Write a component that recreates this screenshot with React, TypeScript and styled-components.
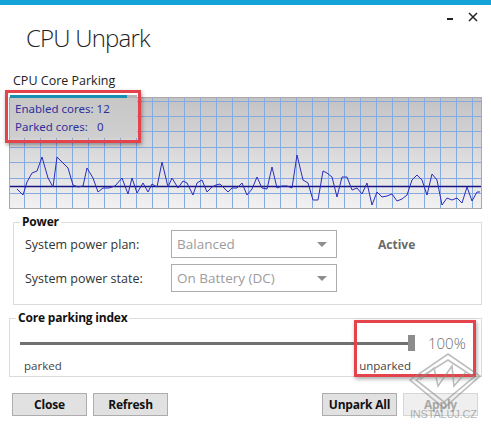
import styled, { createGlobalStyle } from "styled-components";

const GlobalStyle = createGlobalStyle`
  html, body {
    margin: 0;
    padding: 0;
    background: #ffffff;
  }
  body {
    font-family: "Open Sans", "Noto Sans", sans-serif;
    color: #222;
  }
`;

const Window = styled.div`
  position: relative;
  width: 491px;
  height: 438px;
  overflow: hidden;
  background: #fff;
  display: flex;
  flex-direction: column;
`;

const AccentBar = styled.div`
  height: 5px;
  background: #14a3d9;
  flex-shrink: 0;
`;

const Header = styled.div`
  display: flex;
  justify-content: space-between;
  align-items: flex-start;
  height: 57px;
`;

const Title = styled.h1`
  margin: 17px 0 0 26px;
  font-size: 24px;
  font-weight: 300;
  line-height: 32px;
  color: #1e1e1e;
  letter-spacing: -0.8px;
`;

const Controls = styled.div`
  display: flex;
  align-items: center;
  gap: 14px;
  margin: 7px 13px 0 0;
`;

const ControlIcon = styled.svg`
  display: block;
`;

const SectionLabel = styled.div`
  margin: 10px 0 0 13px;
  font-size: 12.5px;
  line-height: 18px;
  color: #222;
`;

const Chart = styled.div`
  position: relative;
  margin: 7px 0 0 9px;
  width: 471px;
  height: 110px;
  border: 1px solid #a8a8a8;
  background: linear-gradient(#c3c3c3, #f1f1f1);
`;

const ChartSvg = styled.svg`
  display: block;
`;

const InfoPanel = styled.div`
  position: absolute;
  left: 0;
  top: -3px;
  width: 127px;
  height: 43px;
  background: linear-gradient(#c6c6c6, #cfcfcf);
  font-family: "Noto Sans", "Open Sans", sans-serif;
  font-size: 11.5px;
  line-height: 18px;
  color: #30309c;
`;

const Progress = styled.div`
  display: flex;
  height: 3px;
  margin-bottom: 2px;
`;

const ProgressFill = styled.div`
  width: 117px;
  background: #1a8fb0;
`;

const ProgressRest = styled.div`
  flex: 1;
  background: #b5b5b5;
`;

const InfoLine = styled.div`
  padding-left: 5px;
  white-space: pre;
`;

const Annotation = styled.div<{ $x: number; $y: number; $w: number; $h: number }>`
  position: absolute;
  left: ${(p) => p.$x}px;
  top: ${(p) => p.$y}px;
  width: ${(p) => p.$w}px;
  height: ${(p) => p.$h}px;
  border: 3px solid #e5434b;
  box-sizing: border-box;
  box-shadow: 1px 2px 4px rgba(0, 0, 0, 0.35);
  pointer-events: none;
`;

const Group = styled.fieldset<{ $left: number; $width: number; $top: number }>`
  margin: ${(p) => p.$top}px 0 0 ${(p) => p.$left}px;
  width: ${(p) => p.$width}px;
  box-sizing: border-box;
  border: 1px solid #dcdcdc;
  padding: 0 10px;
  min-width: 0;
`;

const Legend = styled.legend`
  margin-left: -4px;
  padding: 0 2px;
  font-size: 12px;
  font-weight: 700;
  line-height: 16px;
  letter-spacing: -0.2px;
  color: #111;
`;

const PowerGrid = styled.div`
  display: grid;
  grid-template-columns: 146px 166px auto;
  row-gap: 6px;
  align-items: center;
  padding: 0 0 12px 1px;
`;

const FieldLabel = styled.div`
  font-size: 12.5px;
  color: #333;
`;

const Select = styled.div`
  display: flex;
  align-items: center;
  justify-content: space-between;
  box-sizing: border-box;
  height: 28px;
  border: 1px solid #acacac;
  background: #fff;
  padding: 0 9px 0 5px;
  font-size: 13.5px;
  color: #9c9c9c;
`;

const Arrow = styled.span`
  width: 0;
  height: 0;
  border-left: 5px solid transparent;
  border-right: 5px solid transparent;
  border-top: 5px solid #8e8e8e;
`;

const Status = styled.div`
  margin-left: 41px;
  font-size: 12px;
  font-weight: 700;
  color: #6a6a6a;
`;

const SliderRow = styled.div`
  display: flex;
  align-items: center;
  height: 20px;
  margin-top: 7px;
`;

const Track = styled.div`
  width: 388px;
  height: 3px;
  background: #707070;
`;

const Thumb = styled.div`
  width: 7px;
  height: 16px;
  background: #8c8c8c;
`;

const Percent = styled.div`
  margin-left: 13px;
  font-size: 15px;
  font-weight: 300;
  color: #6e6e6e;
`;

const ScaleLabels = styled.div`
  display: flex;
  justify-content: space-between;
  width: 387px;
  padding: 4px 0 2px 4px;
  font-size: 11.5px;
  line-height: 17px;
  color: #444;
`;

const ButtonBar = styled.div`
  display: flex;
  align-items: center;
  gap: 6px;
  margin: 16px 13px 0 12px;
`;

const Spacer = styled.div`
  flex: 1;
`;

const Button = styled.button<{ $disabled?: boolean }>`
  width: 75px;
  height: 23px;
  padding: 0;
  border: 1px solid ${(p) => (p.$disabled ? "#d6d6d6" : "#adadad")};
  background: ${(p) => (p.$disabled ? "#efefef" : "#e1e1e1")};
  font-family: "Open Sans", "Noto Sans", sans-serif;
  font-size: 12px;
  font-weight: 700;
  letter-spacing: -0.2px;
  color: ${(p) => (p.$disabled ? "#a8a8a8" : "#111")};
`;

const Watermark = styled.div`
  position: absolute;
  left: 404px;
  top: 350px;
  width: 80px;
  height: 72px;
  opacity: 0.55;
  pointer-events: none;
`;

const WatermarkText = styled.div`
  position: absolute;
  left: 6px;
  bottom: 2px;
  font-family: "Liberation Sans", Arial, sans-serif;
  font-size: 11px;
  letter-spacing: -0.2px;
  color: #777;
`;

// Sample trace, screen coordinates as read from the capture
const samples: [number, number][] = [
  [17, 189], [23, 195], [27, 182], [32, 173], [37, 171], [42, 157], [48, 178],
  [53, 187], [57, 157], [63, 163], [68, 168], [73, 185], [78, 187], [83, 186],
  [87, 168], [93, 178], [98, 192], [103, 188], [109, 188], [115, 186], [122, 178],
  [128, 194], [132, 178], [137, 193], [143, 183], [148, 192], [152, 184],
  [157, 187], [162, 162], [168, 187], [172, 178], [178, 188], [183, 181],
  [187, 183], [193, 195], [197, 183], [202, 180], [207, 192], [212, 187],
  [216, 185], [220, 184], [228, 192], [232, 188], [237, 188], [242, 183],
  [247, 195], [252, 189], [257, 177], [262, 188], [267, 189], [272, 167],
  [277, 188], [282, 186], [287, 186], [292, 188], [297, 155], [303, 180],
  [308, 183], [313, 200], [318, 200], [323, 171], [327, 173], [332, 177],
  [337, 197], [342, 177], [347, 177], [352, 190], [357, 188], [362, 194],
  [367, 183], [372, 205], [377, 192], [382, 197], [387, 196], [392, 194],
  [397, 201], [402, 199], [407, 195], [412, 180], [417, 175], [422, 180],
  [427, 195], [432, 174], [437, 180], [442, 205], [447, 198], [452, 200],
  [457, 198], [462, 203], [467, 187], [472, 201], [477, 192], [480, 192],
];

const CHART_X = 10;
const CHART_Y = 98;
const CHART_W = 471;
const CHART_H = 110;

function TraceChart() {
  const verticals = [];
  for (let x = 14; x < CHART_W; x += 16) verticals.push(x);
  const horizontals = [];
  for (let y = 2.5; y < CHART_H; y += 15.4) horizontals.push(y);
  const points = samples
    .map(([x, y]) => `${x - CHART_X},${y - CHART_Y}`)
    .join(" ");

  return (
    <ChartSvg width={CHART_W} height={CHART_H}>
      {verticals.map((x) => (
        <line key={`v${x}`} x1={x + 0.5} y1={0} x2={x + 0.5} y2={CHART_H} stroke="#87a9e2" strokeWidth={1} />
      ))}
      {horizontals.map((y) => (
        <line key={`h${y}`} x1={0} y1={Math.round(y) + 0.5} x2={CHART_W} y2={Math.round(y) + 0.5} stroke="#87a9e2" strokeWidth={1} />
      ))}
      <line x1={0} y1={88.5} x2={CHART_W} y2={88.5} stroke="#151585" strokeWidth={1.4} />
      <polyline points={points} fill="none" stroke="#2c2cbc" strokeWidth={1} />
    </ChartSvg>
  );
}

export default function App() {
  return (
    <>
      <GlobalStyle />
      <Window>
        <AccentBar />
        <Header>
          <Title>CPU Unpark</Title>
          <Controls>
            <ControlIcon width="8" height="8" viewBox="0 0 8 8">
              <rect x="1" y="5" width="6" height="2" fill="#222" />
            </ControlIcon>
            <ControlIcon width="10" height="10" viewBox="0 0 10 10">
              <path d="M1 1 L9 9 M9 1 L1 9" stroke="#222" strokeWidth="1.5" />
            </ControlIcon>
          </Controls>
        </Header>

        <SectionLabel>CPU Core Parking</SectionLabel>
        <Chart>
          <TraceChart />
          <InfoPanel>
            <Progress>
              <ProgressFill />
              <ProgressRest />
            </Progress>
            <InfoLine>Enabled cores: 12</InfoLine>
            <InfoLine>Parked cores:   0</InfoLine>
          </InfoPanel>
        </Chart>

        <Group $left={13} $width={469} $top={5}>
          <Legend>Power</Legend>
          <PowerGrid>
            <FieldLabel>System power plan:</FieldLabel>
            <Select>
              Balanced
              <Arrow />
            </Select>
            <Status>Active</Status>
            <FieldLabel>System power state:</FieldLabel>
            <Select>
              On Battery (DC)
              <Arrow />
            </Select>
            <div />
          </PowerGrid>
        </Group>

        <Group $left={9} $width={473} $top={5}>
          <Legend>Core parking index</Legend>
          <SliderRow>
            <Track />
            <Thumb />
            <Percent>100%</Percent>
          </SliderRow>
          <ScaleLabels>
            <span>parked</span>
            <span>unparked</span>
          </ScaleLabels>
        </Group>

        <ButtonBar>
          <Button>Close</Button>
          <Button>Refresh</Button>
          <Spacer />
          <Button>Unpark All</Button>
          <Button $disabled>Apply</Button>
        </ButtonBar>

        <Annotation $x={5} $y={90} $w={136} $h={53} />
        <Annotation $x={354} $y={320} $w={122} $h={57} />

        <Watermark>
          <svg width="80" height="60" viewBox="0 0 80 60">
            <g fill="none" stroke="#8a8a8a" strokeWidth="1.6">
              <polygon points="44,4 76,26 40,58 6,30" />
              <polygon points="44,10 70,27 40,52 12,30" />
              <polyline points="16,30 30,18 34,36 48,16 50,36 62,22" />
            </g>
          </svg>
          <WatermarkText>INSTALUJ.CZ</WatermarkText>
        </Watermark>
      </Window>
    </>
  );
}
